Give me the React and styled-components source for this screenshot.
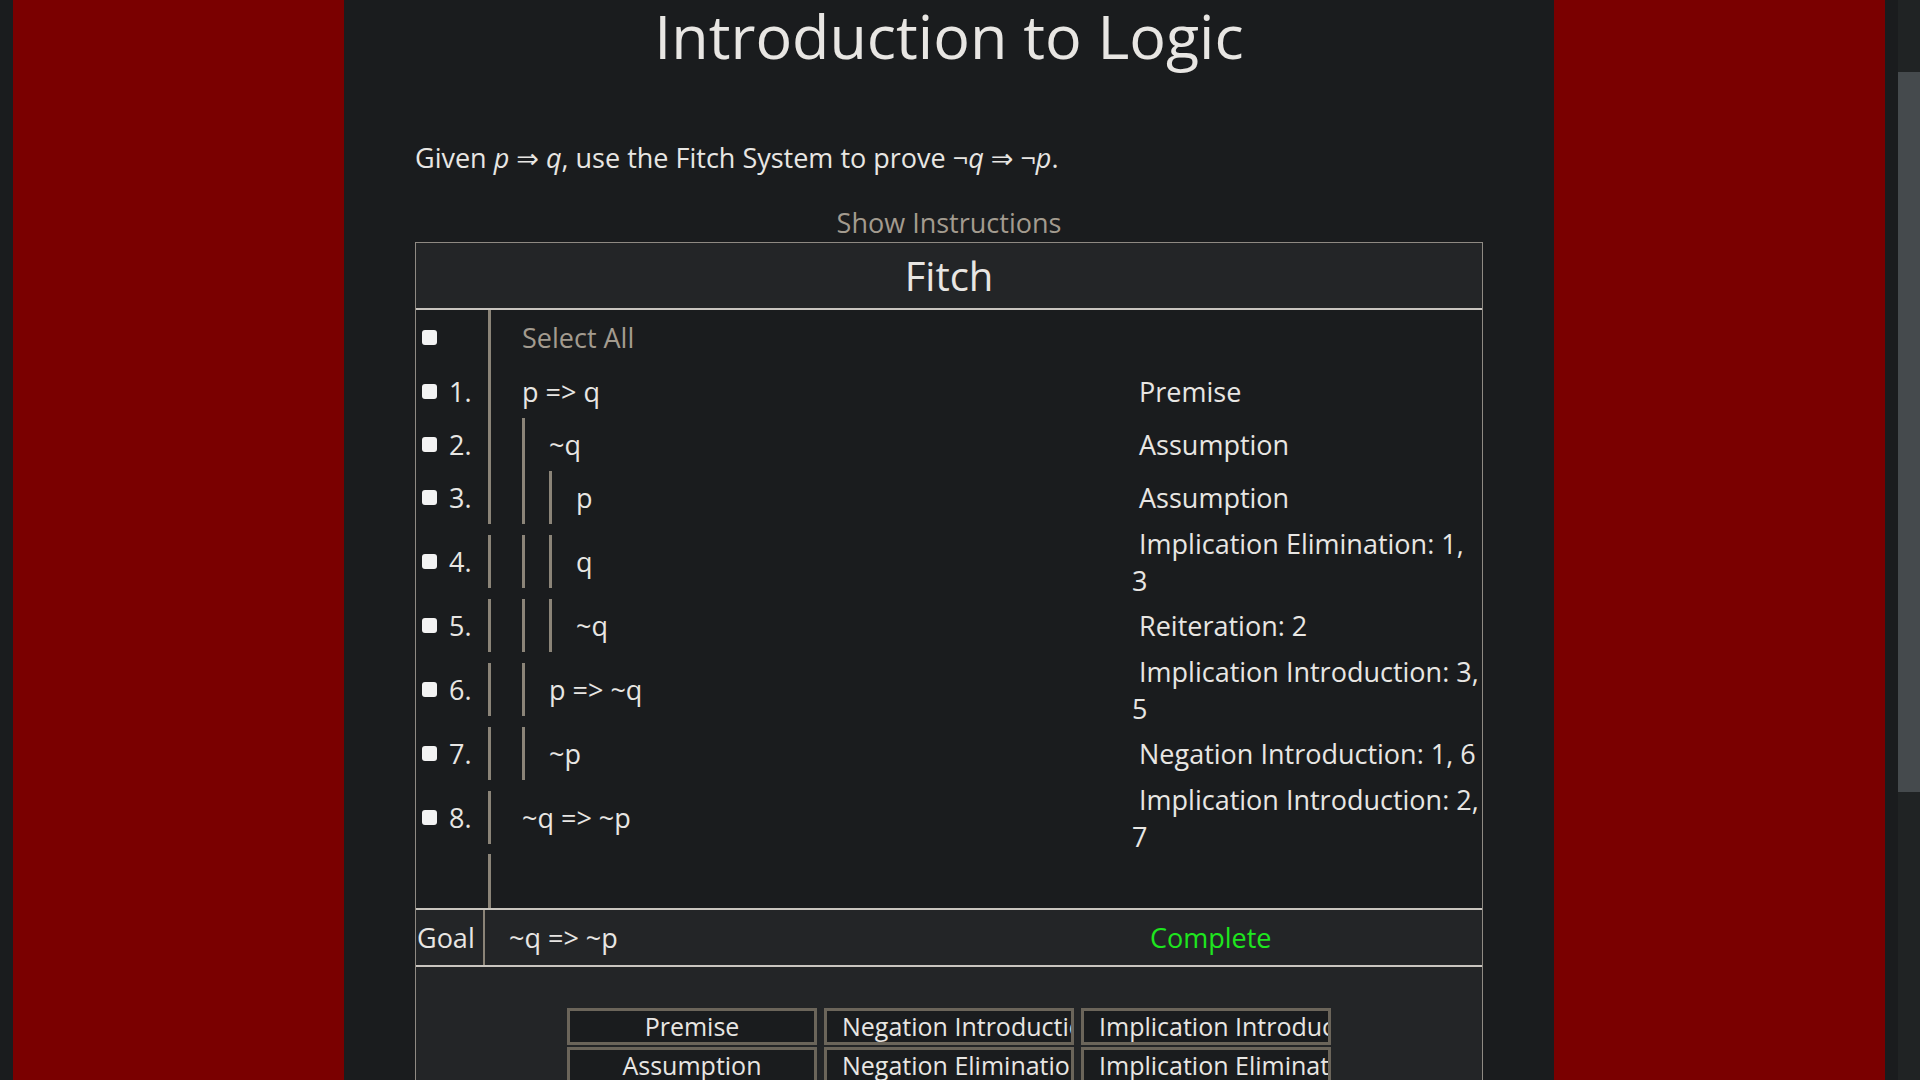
import React, { useLayoutEffect } from 'react';
import styled, { createGlobalStyle } from 'styled-components';

const GlobalStyle = createGlobalStyle`
  html {
    background: #1a1c1e;
  }
  body {
    margin: 0;
    background: #1a1c1e;
    color: #e8e6e3;
    font-family: 'Open Sans', 'Noto Sans', 'DejaVu Sans', sans-serif;
    font-size: 27px;
  }
`;

const lines = [
  { n: 1, depth: 0, text: 'p => q', reason: 'Premise' },
  { n: 2, depth: 1, text: '~q', reason: 'Assumption' },
  { n: 3, depth: 2, text: 'p', reason: 'Assumption' },
  { n: 4, depth: 2, text: 'q', reason: 'Implication Elimination: 1, 3', gap: 11 },
  { n: 5, depth: 2, text: '~q', reason: 'Reiteration: 2', gap: 11 },
  { n: 6, depth: 1, text: 'p => ~q', reason: 'Implication Introduction: 3, 5', gap: 11 },
  { n: 7, depth: 1, text: '~p', reason: 'Negation Introduction: 1, 6', gap: 11 },
  { n: 8, depth: 0, text: '~q => ~p', reason: 'Implication Introduction: 2, 7', gap: 11 },
];

const rules = [
  'Premise',
  'Negation Introduction',
  'Implication Introduction',
  'Assumption',
  'Negation Elimination',
  'Implication Elimination',
  'Reiteration',
  'And Introduction',
  'Or Introduction',
  'Biconditional Introduction',
  'And Elimination',
  'Or Elimination',
];

const App = () => {
  // the page is shown scrolled a little, as in the screenshot
  useLayoutEffect(() => {
    window.scrollTo(0, 108);
  }, []);

  return (
    <>
      <GlobalStyle />
      <Page>
        <Side />
        <Main>
          <Title>Introduction to Logic</Title>
          <Prompt>
            Given <Var>p</Var> ⇒ <Var>q</Var>, use the Fitch System to prove ¬
            <Var>q</Var> ⇒ ¬<Var>p</Var>.
          </Prompt>
          <Toggle>Show Instructions</Toggle>
          <Fitch>
            <FitchHeader>Fitch</FitchHeader>
            <Lines>
              <Row $h={55}>
                <Gutter>
                  <Box type='checkbox' />
                </Gutter>
                <Cell $muted>Select All</Cell>
                <Reason />
              </Row>
              {lines.map((line) => (
                <Row key={line.n} $gap={line.gap} $h={53}>
                  <Gutter>
                    <Box type='checkbox' />
                    <span>{line.n}.</span>
                  </Gutter>
                  <Cell>
                    {Array.from({ length: line.depth }).map((_, i) => (
                      <Nest key={i} />
                    ))}
                    {line.text}
                  </Cell>
                  <Reason>{'\u00a0' + line.reason}</Reason>
                </Row>
              ))}
              <Row $gap={10} $h={54}>
                <Gutter />
                <Cell />
                <Reason />
              </Row>
            </Lines>
            <GoalRow>
              <GoalLabel>Goal</GoalLabel>
              <GoalFormula>~q =&gt; ~p</GoalFormula>
              <Status>Complete</Status>
            </GoalRow>
            <RulePanel>
              {rules.map((rule) => (
                <RuleButton key={rule}>{rule}</RuleButton>
              ))}
            </RulePanel>
          </Fitch>
        </Main>
        <Side />
      </Page>
      <ScrollTrack>
        <ScrollThumb />
      </ScrollTrack>
    </>
  );
};

const Page = styled.div`
  display: grid;
  grid-template-columns: 1fr 1210px 1fr;
  margin-right: 22px;
  padding: 0 13px;
  min-height: 1620px;
`;

const Side = styled.div`
  background-color: #7a0000;
`;

const Main = styled.main`
  padding: 102px 71px 0;
`;

const Title = styled.h1`
  margin: 0;
  font-size: 61px;
  font-weight: 400;
  line-height: normal;
  text-align: center;
`;

const Prompt = styled.p`
  margin: 62px 0 0;
  line-height: normal;
`;

const Var = styled.i`
  font-style: italic;
`;

const Toggle = styled.div`
  margin-top: 28px;
  text-align: center;
  color: #a39b8f;
  line-height: normal;
  cursor: pointer;
`;

const Fitch = styled.section`
  margin-top: 1px;
  border: 1px solid #8f8a83;
`;

const FitchHeader = styled.div`
  padding: 5px 0;
  background-color: #232527;
  border-bottom: 2px solid #c9c5bf;
  font-size: 40px;
  line-height: normal;
  text-align: center;
`;

const Lines = styled.div`
  display: flex;
  flex-direction: column;
`;

const Row = styled.div`
  display: flex;
  align-items: center;
  height: ${(p) => p.$h}px;
  margin-top: ${(p) => p.$gap || 0}px;
  line-height: normal;
`;

const Gutter = styled.div`
  box-sizing: border-box;
  width: 72px;
  padding-left: 6px;
  display: flex;
  align-items: center;
  gap: 12px;
`;

const Box = styled.input`
  appearance: none;
  width: 15px;
  height: 15px;
  margin: 0;
  border-radius: 3px;
  background-color: #f3f3f3;
`;

const Cell = styled.div`
  flex: 1;
  align-self: stretch;
  display: flex;
  align-items: center;
  padding-left: 31px;
  border-left: 3px solid #8b8478;
  color: ${(p) => (p.$muted ? '#a39b8f' : '#e8e6e3')};
  white-space: pre;
`;

const Nest = styled.div`
  align-self: stretch;
  width: 3px;
  margin-right: 24px;
  background-color: #8b8478;
`;

const Reason = styled.div`
  flex: 0 0 350px;
`;

const GoalRow = styled.div`
  display: flex;
  height: 55px;
  background-color: #232527;
  border-top: 2px solid #c9c5bf;
  border-bottom: 2px solid #c9c5bf;
  line-height: normal;
`;

const GoalLabel = styled.div`
  box-sizing: border-box;
  width: 69px;
  padding-left: 1px;
  display: flex;
  align-items: center;
  border-right: 2px solid #8b8478;
`;

const GoalFormula = styled.div`
  flex: 0 0 665px;
  box-sizing: border-box;
  padding-left: 24px;
  display: flex;
  align-items: center;
`;

const Status = styled.div`
  display: flex;
  align-items: center;
  color: #1ee61e;
`;

const RulePanel = styled.div`
  display: grid;
  grid-template-columns: repeat(3, 250px);
  justify-content: center;
  column-gap: 7px;
  row-gap: 2px;
  padding: 41px 0 40px;
  background-color: #232527;
`;

const RuleButton = styled.button`
  box-sizing: border-box;
  height: 37px;
  padding: 0 15px;
  border: 3px solid #6b655a;
  background-color: #1a1c1e;
  color: #e8e6e3;
  font-family: inherit;
  font-size: 25px;
  line-height: 31px;
  text-align: center;
  white-space: nowrap;
  overflow: hidden;
  cursor: pointer;
`;

const ScrollTrack = styled.div`
  position: fixed;
  top: 0;
  right: 0;
  width: 22px;
  height: 100vh;
  background-color: #202324;
`;

const ScrollThumb = styled.div`
  margin-top: 72px;
  height: 720px;
  background-color: #454a4d;
`;

export default App;
